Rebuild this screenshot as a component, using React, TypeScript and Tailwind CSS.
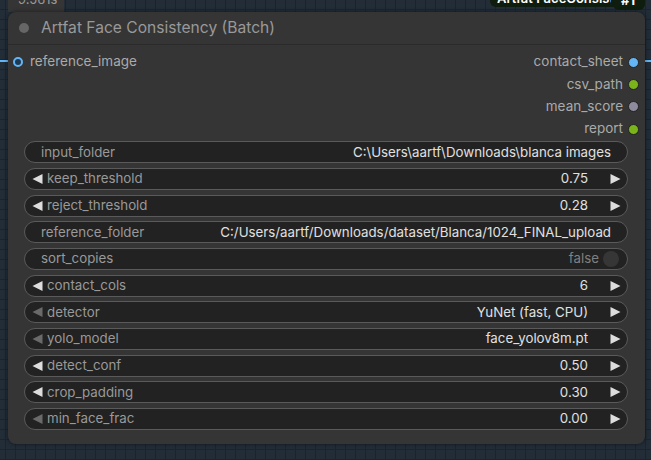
import React from "react";

type W =
  | { kind: "text"; label: string; value: string }
  | { kind: "num"; label: string; value: string; leftDim?: boolean }
  | { kind: "toggle"; label: string; value: string };

const widgets: W[] = [
  { kind: "text", label: "input_folder", value: "C:\\Users\\aartf\\Downloads\\blanca images" },
  { kind: "num", label: "keep_threshold", value: "0.75" },
  { kind: "num", label: "reject_threshold", value: "0.28" },
  { kind: "text", label: "reference_folder", value: "C:/Users/aartf/Downloads/dataset/Blanca/1024_FINAL_upload" },
  { kind: "toggle", label: "sort_copies", value: "false" },
  { kind: "num", label: "contact_cols", value: "6" },
  { kind: "num", label: "detector", value: "YuNet (fast, CPU)", leftDim: true },
  { kind: "num", label: "yolo_model", value: "face_yolov8m.pt", leftDim: true },
  { kind: "num", label: "detect_conf", value: "0.50" },
  { kind: "num", label: "crop_padding", value: "0.30" },
  { kind: "num", label: "min_face_frac", value: "0.00", leftDim: true },
];

const outputs = [
  { name: "contact_sheet", color: "bg-[#64b5f6]" },
  { name: "csv_path", color: "bg-[#7bb31a]" },
  { name: "mean_score", color: "bg-[#8d8b9c]" },
  { name: "report", color: "bg-[#7bb31a]" },
];

function LeftArrow({ dim }: { dim?: boolean }) {
  return (
    <svg width="11" height="10" viewBox="0 0 11 10" className="shrink-0">
      <polygon points="0.5,5 10.5,0 10.5,10" fill={dim ? "#6a6a6a" : "#dddddd"} />
    </svg>
  );
}
function RightArrow() {
  return (
    <svg width="11" height="10" viewBox="0 0 11 10" className="shrink-0">
      <polygon points="10.5,5 0.5,0 0.5,10" fill="#dddddd" />
    </svg>
  );
}

function Widget({ w }: { w: W }) {
  const base =
    "h-[22px] rounded-full border border-[#5a5a5a] bg-[#222222] flex items-center text-[13.3px] leading-none";
  if (w.kind === "text") {
    return (
      <div className={base + " pl-[16px] pr-[16px]"}>
        <span className="text-[#999999] whitespace-nowrap">{w.label}</span>
        <span className="ml-auto text-[#e0e0e0] whitespace-nowrap">{w.value}</span>
      </div>
    );
  }
  if (w.kind === "toggle") {
    return (
      <div className={base + " pl-[16px] pr-[8px]"}>
        <span className="text-[#999999] whitespace-nowrap">{w.label}</span>
        <span className="ml-auto text-[#808080] whitespace-nowrap">{w.value}</span>
        <span className="ml-[4px] w-[16px] h-[16px] rounded-full bg-[#363636]" />
      </div>
    );
  }
  return (
    <div className={base + " pl-[7px] pr-[6px]"}>
      <LeftArrow dim={w.leftDim} />
      <span className="ml-[4px] text-[#999999] whitespace-nowrap">{w.label}</span>
      <span className="ml-auto text-[#e0e0e0] whitespace-nowrap">{w.value}</span>
      <span className="ml-[22px]">
        <RightArrow />
      </span>
    </div>
  );
}

export default function App() {
  return (
    <div
      className="relative w-[651px] h-[460px] overflow-hidden bg-[#222d38] bg-[linear-gradient(#1b242d_1px,transparent_1px),linear-gradient(90deg,#1b242d_1px,transparent_1px)] bg-[length:10px_10px] bg-[position:-5px_-1px]"
      style={{ fontFamily: "Inter, 'Noto Sans', sans-serif" }}
    >
      {/* timing badge */}
      <div className="absolute left-[8px] top-[-8px] w-[56px] h-[20px] rounded-t-[6px] bg-[#353535] text-[#9a9a9a] text-[13px] leading-none pl-[10px] pt-[1px]">
        9.561s
      </div>
      {/* title badge top-right */}
      <div className="absolute left-[490px] top-[-8px] w-[125px] h-[15px] rounded-bl-[6px] bg-[#0f1d0f]">
        <div className="ml-[7px] w-[114px] overflow-hidden whitespace-nowrap text-white text-[13px] font-semibold leading-none">
          Artfat FaceConsiste
        </div>
      </div>
      <div className="absolute left-[613px] top-[-8px] w-[32px] h-[18px] rounded-b-[6px] bg-[#0f1d0f] text-white text-[13px] font-bold leading-none pl-[8px] pt-[2px]">
        #1
      </div>

      {/* wires */}
      <div className="absolute left-0 top-[60px] w-[10px] h-[2px] bg-[#64b5f6]" />
      <div className="absolute left-[642px] top-[60px] w-[10px] h-[2px] bg-[#64b5f6]" />

      {/* node */}
      <div className="absolute left-[8px] top-[12px] w-[637px] h-[432px] rounded-[8px] bg-[#353535] shadow-[0_0_4px_rgba(0,0,0,0.5)] flex flex-col">
        <div className="h-[33px] flex items-center border-b border-[#2a2a2a] shrink-0">
          <span className="ml-[11px] w-[10px] h-[10px] rounded-full bg-[#666666]" />
          <span className="ml-[12px] text-[#999999] text-[15.6px] leading-none">
            Artfat Face Consistency (Batch)
          </span>
        </div>
        <div className="relative pt-[6px] shrink-0">
          <div className="absolute left-[5px] top-[6px] h-[22.3px] flex items-center">
            <span className="w-[10px] h-[10px] rounded-full border-[2.5px] border-[#64b5f6] bg-[#1e3a52]" />
            <span className="ml-[7px] text-[#aaaaaa] text-[13.5px] leading-none">reference_image</span>
          </div>
          {outputs.map((o) => (
            <div key={o.name} className="h-[22.3px] flex items-center justify-end pr-[6px]">
              <span className="text-[#aaaaaa] text-[13.5px] leading-none">{o.name}</span>
              <span className={"ml-[5px] w-[11px] h-[11px] rounded-full border-[1.5px] border-[#222222] " + o.color} />
            </div>
          ))}
        </div>
        <div className="mt-[1px] ml-[16px] mr-[17px] flex flex-col gap-[4.7px]">
          {widgets.map((w) => (
            <Widget key={w.label} w={w} />
          ))}
        </div>
      </div>
    </div>
  );
}
